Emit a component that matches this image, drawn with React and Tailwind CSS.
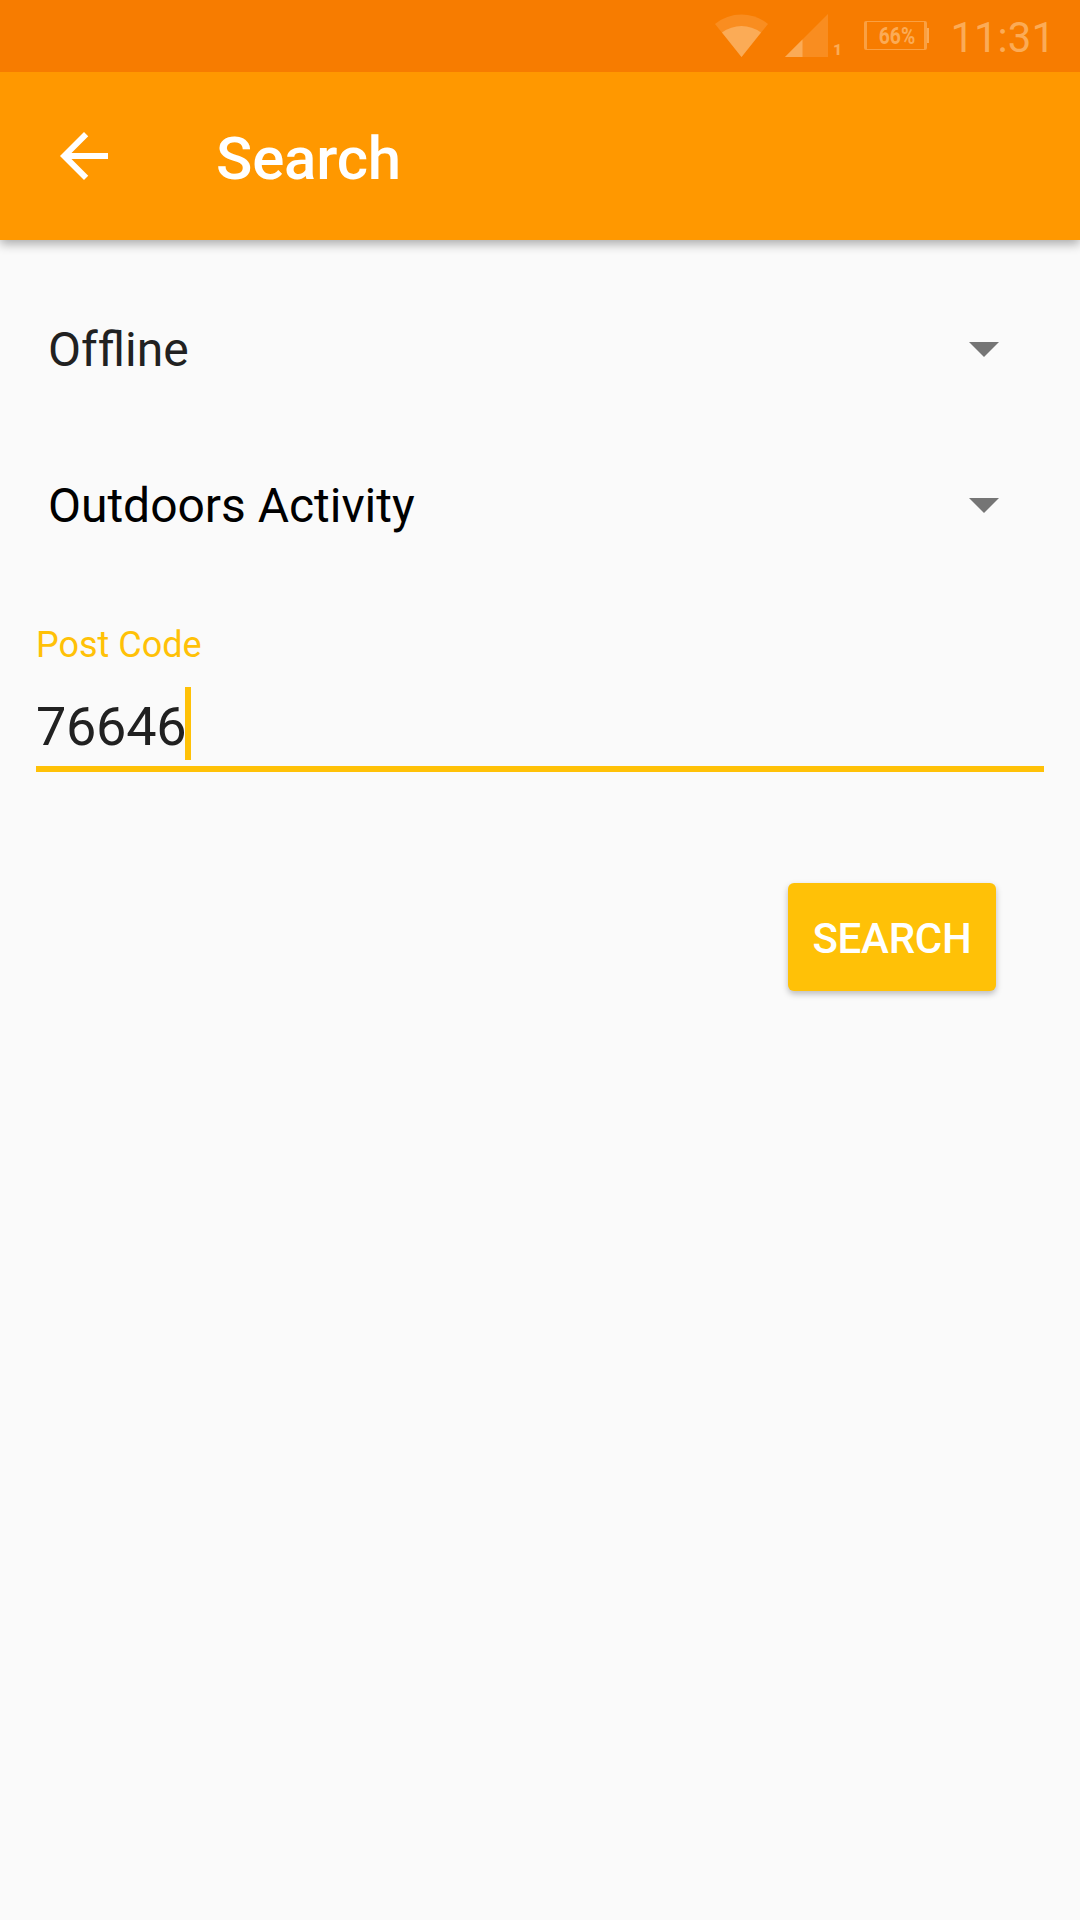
function StatusBar() {
  return (
    <div className="relative z-10 flex h-[72px] items-start justify-end bg-[#f77c00] text-[#fbab56]">
      <svg className="mt-[14px] h-[43px] w-[53px]" viewBox="0 0 53 43">
        <path d="M0 10Q11.500 0.500 26.500 0.500T53 10L26.500 43Z" fill="#f98d20" />
        <path d="M7 18.500Q16 12 26.500 12T46 18.500L26.500 43Z" fill="#fbab56" />
      </svg>
      <svg className="mt-[14px] ml-[17px] h-[43px] w-[43px]" viewBox="0 0 43 43">
        <path d="M43 0V43H0Z" fill="#f98d20" />
        <path d="M17.500 25.500V43H0Z" fill="#fbab56" />
      </svg>
      <span className="mt-[45px] ml-[5px] w-[9px] text-[15.500px] leading-[11px] font-black">1</span>
      <div className="mt-[21px] ml-[22.500px] flex items-center">
        <div className="flex h-[29px] w-[63px] items-center justify-center rounded-[2px] border-x-[3px] border-y-[1.500px] border-[#faa042]">
          <span className="scale-x-[0.82] pt-[1px] pl-[2px] text-[23.500px] leading-[29px] font-bold">66%</span>
        </div>
        <div className="h-[15px] w-[2px] bg-[#fbab56]" />
      </div>
      <span className="mt-[13px] mr-[25px] ml-[21px] text-[42px] leading-[49px]">11:31</span>
    </div>
  );
}

function AppBar() {
  return (
    <header className="relative flex h-[168px] items-center bg-[#ff9800] pl-[48px] text-white shadow-[0_4px_10px_rgba(0,0,0,0.32)]">
      <svg className="h-[72px] w-[72px]" viewBox="0 0 24 24" fill="currentColor">
        <path d="M20 11H7.830l5.590-5.590L12 4l-8 8 8 8 1.410-1.410L7.830 13H20v-2z" />
      </svg>
      <h1 className="ml-[96px] pt-[5px] text-[60px] leading-[70px] font-medium tracking-[-0.2px]">Search</h1>
    </header>
  );
}

function Spinner({ label, tone }) {
  return (
    <div className={`flex h-[72px] items-center justify-between pr-[81px] pl-[48px] ${tone}`}>
      <span className="pt-[2px] text-[48px] leading-[72px]">{label}</span>
      <svg className="h-[15px] w-[30px]" viewBox="0 0 30 15">
        <path d="M0 0H30L15 15Z" fill="#757575" />
      </svg>
    </div>
  );
}

export default function App() {
  return (
    <div className="flex h-[1920px] w-[1080px] flex-col bg-[#fafafa] font-['Roboto',sans-serif]">
      <StatusBar />
      <AppBar />
      <main className="flex flex-col pt-[73px]">
        <Spinner label={"Of\u200cfline"} tone="text-[#212121]" />
        <div className="mt-[84px]">
          <Spinner label="Outdoors Activity" tone="text-black tracking-[-0.03px]" />
        </div>
        <div className="mx-[36px] mt-[83px] flex flex-col border-b-[6px] border-[#ffc107]">
          <label className="text-[36px] leading-[42px] text-[#ffc107]">Post Code</label>
          <div className="mt-[21px] flex h-[79px] items-start">
            <span className="mt-[8px] text-[54px] leading-[64px] tracking-[-0.3px] text-[#212121]">76646</span>
            <span className="-ml-[1px] h-[73px] w-[6px] bg-[#ffc107]" />
          </div>
        </div>
        <button className="mt-[111px] mr-[84px] h-[108px] w-[208px] self-end rounded-[6px] bg-[#ffc107] pt-[3px] text-[42px] font-medium tracking-[-0.25px] text-white shadow-[0_3px_6px_rgba(0,0,0,0.25)]">
          SEARCH
        </button>
      </main>
    </div>
  );
}
